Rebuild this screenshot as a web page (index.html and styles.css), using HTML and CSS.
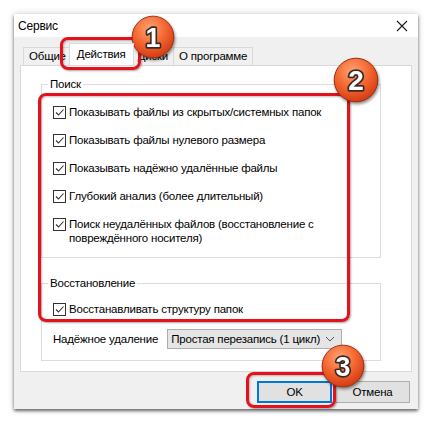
FILE: index.html
```html
<!DOCTYPE html>
<html lang="ru">
<head>
    <meta charset="UTF-8">
    <link rel="stylesheet" href="styles.css">
    <title>Сервис</title>
</head>
<body>
    <div class="window">
        <div class="titlebar">
            <span class="title">Сервис</span>
            <svg class="close" viewBox="0 0 12 12" width="12" height="12">
                <path d="M1 1 L11 11 M11 1 L1 11" stroke="#1a1a1a" stroke-width="1.1" fill="none"/>
            </svg>
        </div>

        <div class="tabs">
            <div class="tab">Общие</div>
            <div class="tab active">Действия</div>
            <div class="tab">Диски</div>
            <div class="tab">О программе</div>
        </div>

        <div class="panel">
            <fieldset class="group search">
                <legend>Поиск</legend>
                <div class="check"><span class="box"></span><span>Показывать файлы из скрытых/системных папок</span></div>
                <div class="check"><span class="box"></span><span>Показывать файлы нулевого размера</span></div>
                <div class="check"><span class="box"></span><span>Показывать надёжно удалённые файлы</span></div>
                <div class="check"><span class="box"></span><span>Глубокий анализ (более длительный)</span></div>
                <div class="check"><span class="box"></span><span>Поиск неудалённых файлов (восстановление с<br>повреждённого носителя)</span></div>
            </fieldset>

            <fieldset class="group restore">
                <legend>Восстановление</legend>
                <div class="check"><span class="box"></span><span>Восстанавливать структуру папок</span></div>
                <div class="select-row">
                    <span>Надёжное удаление</span>
                    <div class="select">
                        <span>Простая перезапись (1 цикл)</span>
                        <svg viewBox="0 0 10 6" width="10" height="6"><path d="M1 1 L5 5 L9 1" stroke="#555" fill="none"/></svg>
                    </div>
                </div>
            </fieldset>
        </div>

        <div class="buttons">
            <button class="btn default">OK</button>
            <button class="btn">Отмена</button>
        </div>
    </div>

    <!-- annotations -->
    <div class="mark m1"></div>
    <div class="mark m2"></div>
    <div class="mark m3"></div>

    <svg class="badge b1" viewBox="0 0 46 46">
        <defs>
            <radialGradient id="g1" cx="42%" cy="30%" r="72%">
                <stop offset="0" stop-color="#ffa474"/>
                <stop offset="0.55" stop-color="#f3652f"/>
                <stop offset="1" stop-color="#d23a12"/>
            </radialGradient>
        </defs>
        <circle cx="23" cy="23" r="21.8" fill="url(#g1)" stroke="#a02c10" stroke-width="1"/>
        <text x="23" y="33" class="num">1</text>
    </svg>
    <svg class="badge b2" viewBox="0 0 46 46">
        <defs>
            <radialGradient id="g2" cx="42%" cy="30%" r="72%">
                <stop offset="0" stop-color="#ffa474"/>
                <stop offset="0.55" stop-color="#f3652f"/>
                <stop offset="1" stop-color="#d23a12"/>
            </radialGradient>
        </defs>
        <circle cx="23" cy="23" r="21.8" fill="url(#g2)" stroke="#a02c10" stroke-width="1"/>
        <text x="23" y="33" class="num">2</text>
    </svg>
    <svg class="badge b3" viewBox="0 0 46 46">
        <defs>
            <radialGradient id="g3" cx="42%" cy="30%" r="72%">
                <stop offset="0" stop-color="#ffa474"/>
                <stop offset="0.55" stop-color="#f3652f"/>
                <stop offset="1" stop-color="#d23a12"/>
            </radialGradient>
        </defs>
        <circle cx="23" cy="23" r="21.8" fill="url(#g3)" stroke="#a02c10" stroke-width="1"/>
        <text x="23" y="33" class="num">3</text>
    </svg>
</body>
</html>
```

FILE: styles.css
```css
body {
    margin: 0;
    padding: 14px;
    width: 432px;
    height: 425px;
    box-sizing: border-box;
    background: #fff;
    font-family: 'Liberation Sans', Arial, sans-serif;
    font-size: 11.5px;
    letter-spacing: -0.2px;
    color: #000;
    position: relative;
    overflow: hidden;
}

.window {
    width: 404px;
    height: 395px;
    background: #f0f0f0;
    box-shadow: 0 2px 3px rgba(0, 0, 0, 0.55), 0 0 7px rgba(0, 0, 0, 0.18);
    display: flex;
    flex-direction: column;
}

.titlebar {
    height: 23px;
    background: #fff;
    display: flex;
    align-items: center;
    justify-content: space-between;
    padding: 0 10px 0 4px;
    font-size: 12px;
}

.close {
    display: block;
}

.tabs {
    display: flex;
    align-items: flex-end;
    height: 21px;
    margin: 7px 6px 0;
    padding-left: 3px;
    white-space: nowrap;
}

.tab {
    height: 17px;
    line-height: 17px;
    padding: 0 5px;
    border: 1px solid #d9d9d9;
    border-bottom: none;
    margin-right: -1px;
    background: #f0f0f0;
}

.tab.active {
    height: 21px;
    line-height: 20px;
    background: #fff;
    margin: 0 -2px 0 -2px;
    padding: 0 7px;
    position: relative;
    z-index: 1;
}

.panel {
    height: 307px;
    margin: 0 6px;
    box-sizing: border-box;
    background: #fff;
    border: 1px solid #d9d9d9;
    padding: 11px 30px 0 20px;
}

.group {
    margin: 0;
    border: 1px solid #dcdcdc;
    padding: 14px 0 12px 11px;
    min-width: 0;
}

.group legend {
    margin-left: -5px;
    padding: 0 2px;
    line-height: 14px;
}

.restore {
    margin-top: 18px;
    padding-top: 12px;
    padding-bottom: 11px;
}

.check {
    display: flex;
    align-items: flex-start;
    line-height: 14px;
    margin-bottom: 14px;
}

.search .check:last-child,
.restore .check {
    margin-bottom: 0;
}

.box {
    flex: none;
    width: 11px;
    height: 11px;
    border: 1px solid #333;
    margin: 1px 3px 0 0;
    background: #fff url("data:image/svg+xml,%3Csvg xmlns='http://www.w3.org/2000/svg' viewBox='0 0 11 11'%3E%3Cpath d='M2 5.5 L4.5 8 L9.5 2.5' stroke='%23333' stroke-width='1.1' fill='none'/%3E%3C/svg%3E") no-repeat center;
}

.select-row {
    display: flex;
    align-items: center;
    gap: 9px;
    margin-top: 13px;
    white-space: nowrap;
}

.select {
    width: 175px;
    height: 20px;
    box-sizing: border-box;
    border: 1px solid #adadad;
    background: #e5e5e5;
    display: flex;
    align-items: center;
    justify-content: space-between;
    padding: 0 6px 0 3px;
}

.buttons {
    display: flex;
    justify-content: flex-end;
    gap: 3px;
    margin-top: 9px;
    padding-right: 8px;
}

.btn {
    width: 75px;
    height: 22px;
    font-family: inherit;
    font-size: 11.5px;
    letter-spacing: -0.2px;
    background: #e1e1e1;
    border: 1px solid #adadad;
    padding: 0;
    color: #000;
}

.btn.default {
    border: 2px solid #0078d7;
}

.mark {
    position: absolute;
    border: 3px solid #e3121c;
    border-radius: 8px;
    box-shadow: 1px 1px 2px rgba(0, 0, 0, 0.35), inset 1px 1px 2px rgba(0, 0, 0, 0.25);
}

.m1 {
    left: 60px;
    top: 37px;
    width: 75px;
    height: 27px;
}

.m2 {
    left: 38px;
    top: 93px;
    width: 306px;
    height: 223px;
}

.m3 {
    left: 246px;
    top: 372px;
    width: 84px;
    height: 30px;
}

.badge {
    position: absolute;
    filter: drop-shadow(1px 2px 1.5px rgba(0, 0, 0, 0.45));
}

.b1 {
    left: 131px;
    top: 15px;
    width: 44px;
    height: 44px;
}

.b2 {
    left: 333px;
    top: 57px;
    width: 46px;
    height: 46px;
}

.b3 {
    left: 321px;
    top: 344px;
    width: 44px;
    height: 44px;
}

.num {
    font-family: 'Liberation Sans', Arial, sans-serif;
    font-weight: bold;
    font-size: 28px;
    letter-spacing: 0;
    text-anchor: middle;
    fill: #fff;
    stroke: #3a2a26;
    stroke-width: 3.5px;
    stroke-linejoin: round;
    paint-order: stroke;
}
```
